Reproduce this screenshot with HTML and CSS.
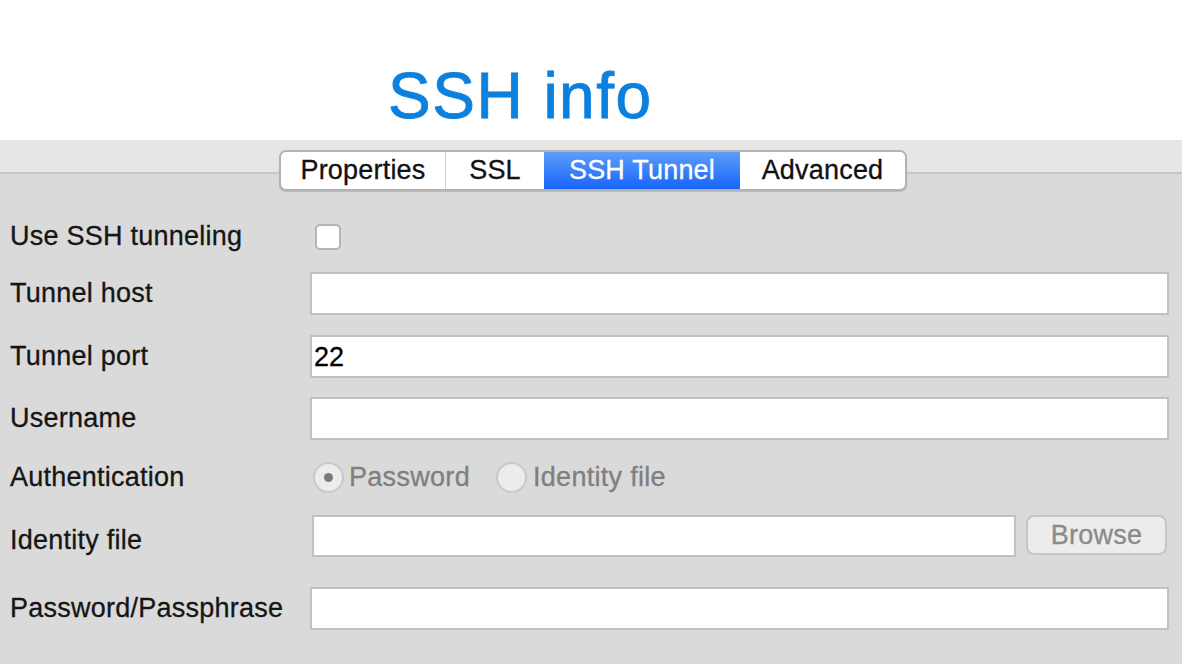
FILE: index.html
```html
<!DOCTYPE html>
<html>
<head>
<meta charset="utf-8">
<link rel="stylesheet" href="styles.css">
</head>
<body>
<header class="top">
  <h1 class="title">SSH info</h1>
</header>
<div class="tabband">
  <div class="tabs">
    <div class="tab tab-props">Properties</div>
    <div class="tab tab-ssl">SSL</div>
    <div class="tab tab-ssh active">SSH Tunnel</div>
    <div class="tab tab-adv">Advanced</div>
  </div>
</div>
<form class="form">
  <div class="row row-use">
    <label class="lbl">Use SSH tunneling</label>
    <span class="checkbox"></span>
  </div>
  <div class="row row-host">
    <label class="lbl">Tunnel host</label>
    <div class="field"></div>
  </div>
  <div class="row row-port">
    <label class="lbl">Tunnel port</label>
    <div class="field">22</div>
  </div>
  <div class="row row-user">
    <label class="lbl">Username</label>
    <div class="field"></div>
  </div>
  <div class="row row-auth">
    <label class="lbl">Authentication</label>
    <div class="radios">
      <span class="radio checked"></span><span class="rtext">Password</span>
      <span class="radio second"></span><span class="rtext">Identity file</span>
    </div>
  </div>
  <div class="row row-idfile">
    <label class="lbl lbl-low">Identity file</label>
    <div class="field field-id"></div>
    <div class="browse">Browse</div>
  </div>
  <div class="row row-pass">
    <label class="lbl">Password/Passphrase</label>
    <div class="field"></div>
  </div>
</form>
</body>
</html>
```
FILE: styles.css
```css
html, body {
  margin: 0;
  padding: 0;
}
body {
  background: #dadada;
  width: 1182px;
  height: 664px;
  overflow: hidden;
  font-family: "Liberation Sans", Arial, sans-serif;
  font-size: 27px;
  color: #151515;
}
.top {
  background: #ffffff;
  height: 140px;
  box-sizing: border-box;
  padding: 64px 0 0 388px;
}
.title {
  margin: 0;
  font-family: "Liberation Sans", Arial, sans-serif;
  font-weight: normal;
  font-size: 64px;
  line-height: 64px;
  letter-spacing: 1.5px;
  color: #0b80de;
  -webkit-text-stroke: 0.8px #0b80de;
  text-shadow: 0 0 3px rgba(0, 0, 0, 0.12);
}
.tabband {
  height: 22px;
  padding-top: 10px;
  background: #e6e6e6;
  border-bottom: 2px solid #c6c6c6;
  box-sizing: content-box;
}
.tabs {
  position: relative;
  z-index: 1;
  display: flex;
  margin: 0 0 0 279px;
  width: 628px;
  height: 41px;
  box-sizing: border-box;
  border: 2px solid #b3b3b3;
  border-radius: 7px;
  background: #ffffff;
  overflow: hidden;
  box-shadow: 0 1px 1px rgba(0, 0, 0, 0.15);
}
.tab {
  display: flex;
  align-items: center;
  justify-content: center;
  height: 100%;
  color: #111;
  font-size: 27px;
  line-height: 1;
  padding-bottom: 1px;
  box-sizing: border-box;
  letter-spacing: 0.2px;
  -webkit-text-stroke: 0.3px currentColor;
}
.tab-props { width: 165px; border-right: 1px solid #cfcfcf; }
.tab-ssl { width: 98px; }
.tab-ssh { width: 196px; }
.tab-adv { width: 165px; }
.tab.active {
  background: linear-gradient(#5c9ef9, #1764fa);
  color: #ffffff;
}
.form {
  margin: 0;
  padding: 41px 13px 0 10px;
}
.row {
  display: flex;
  align-items: center;
  height: 43px;
}
.row-host { margin-top: 14px; }
.row-port { margin-top: 20px; }
.row-user { margin-top: 19px; }
.row-auth { margin-top: 16px; }
.row-idfile { margin-top: 16px; }
.row-pass { margin-top: 29px; }
.lbl {
  width: 300px;
  flex: none;
  line-height: 1;
  letter-spacing: 0.25px;
  -webkit-text-stroke: 0.3px currentColor;
}
.lbl-low { padding-top: 8px; }
.checkbox {
  width: 26px;
  height: 26px;
  box-sizing: border-box;
  margin-left: 5px;
  border: 2px solid #b5b5b5;
  border-radius: 5px;
  background: #ffffff;
}
.field {
  width: 859px;
  height: 43px;
  box-sizing: border-box;
  border: 2px solid #c1c1c1;
  background: #ffffff;
  padding: 6px 2px 0 2px;
  line-height: 28px;
  color: #000;
  -webkit-text-stroke: 0.3px currentColor;
}
.field-id {
  width: 704px;
  height: 42px;
  margin-left: 2px;
  align-self: flex-start;
}
.browse {
  margin-left: 10px;
  width: 141px;
  height: 40px;
  box-sizing: border-box;
  border: 2px solid #c6c6c6;
  border-radius: 8px;
  background: #ececec;
  color: #8a8a8a;
  display: flex;
  align-items: center;
  justify-content: center;
  align-self: flex-start;
  letter-spacing: 0.25px;
  -webkit-text-stroke: 0.3px currentColor;
}
.radios {
  display: flex;
  align-items: center;
  color: #7f7f7f;
  margin-left: 3px;
}
.radio {
  width: 31px;
  height: 31px;
  box-sizing: border-box;
  border-radius: 50%;
  border: 2px solid #c9c9c9;
  background: #ececec;
  display: flex;
  align-items: center;
  justify-content: center;
  margin-right: 5px;
}
.radio.checked::after {
  content: "";
  width: 9px;
  height: 9px;
  border-radius: 50%;
  background: #7a7a7a;
}
.radio.second { margin-left: 26px; margin-right: 6px; }
.rtext { line-height: 1; letter-spacing: 0.3px; -webkit-text-stroke: 0.3px currentColor; }
```
